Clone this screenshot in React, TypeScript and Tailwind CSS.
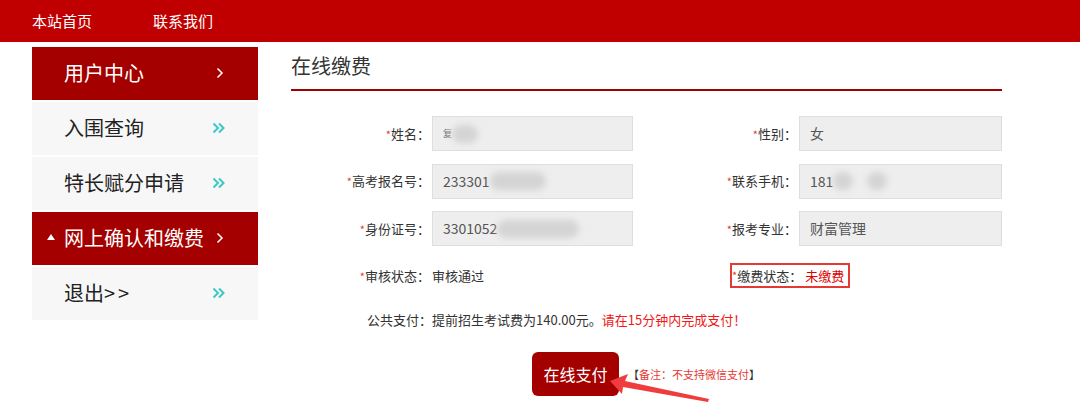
import React from "react";

const font = { fontFamily: '"Noto Sans CJK SC", "Noto Sans", sans-serif' };

const Chevron = () => (
  <svg width="8" height="12" viewBox="0 0 8 12" fill="none">
    <path d="M1.5 1.5 L6 6 L1.5 10.5" stroke="#fff" strokeWidth="1.5" />
  </svg>
);

const DoubleChevron = () => (
  <svg width="14" height="12" viewBox="0 0 14 12" fill="none">
    <path d="M1.5 1.5 L6 6 L1.5 10.5 M7 1.5 L11.5 6 L7 10.5" stroke="#3cc9c5" strokeWidth="2" />
  </svg>
);

const menu = [
  { text: "用户中心", active: true },
  { text: "入围查询" },
  { text: "特长赋分申请" },
  { text: "网上确认和缴费", active: true, caret: true },
  { text: "退出", tail: true },
];

const Blur = ({ w }: { w: number }) => (
  <span
    className="inline-block h-[18px] rounded-full bg-[#d4d4d4] blur-[3px]"
    style={{ width: w }}
  />
);

const Label = ({ text, w }: { text: string; w: string }) => (
  <div className={`${w} shrink-0 text-right text-[13px] text-[#333] pr-[2px]`}>
    <span className="text-[#e53935] text-[11px]">*</span>
    {text}：
  </div>
);

const Field = ({ children, w }: { children: React.ReactNode; w: string }) => (
  <div
    className={`${w} h-[35px] shrink-0 flex items-center bg-[#eeeeee] border border-[#dedede] pl-[10px] text-[14px] text-[#555]`}
  >
    {children}
  </div>
);

export default function App() {
  return (
    <div className="relative w-[1080px] h-[418px] overflow-hidden bg-white" style={font}>
      <div className="h-[42px] bg-[#c00000] flex items-center pl-[32px] gap-[61px] text-white text-[15px]">
        <span>本站首页</span>
        <span>联系我们</span>
      </div>

      <div className="flex pt-[5px]">
        <ul className="ml-[32px] w-[226px] flex flex-col gap-[2.5px]">
          {menu.map((item, i) => (
            <li
              key={i}
              className={`h-[52.5px] flex items-center relative text-[20px] ${
                item.active ? "bg-[#a50000] text-white" : "bg-[#f7f7f7] text-[#222]"
              }`}
            >
              {item.caret && (
                <span className="absolute left-[15px] top-[22px] w-0 h-0 border-l-[4px] border-r-[4px] border-b-[6px] border-l-transparent border-r-transparent border-b-white" />
              )}
              <span className="pl-[32px] flex-1">
                {item.text}
                {item.tail && <span className="tracking-[3px]">&gt;&gt;</span>}
              </span>
              <span className="w-[46px] flex">
                {item.active ? <span className="pl-[4px]"><Chevron /></span> : <DoubleChevron />}
              </span>
            </li>
          ))}
        </ul>

        <div className="ml-[33px] w-[711px]">
          <div className="h-[44px] border-b-2 border-[#a00000] text-[20px] text-[#333] leading-[38px]">
            在线缴费
          </div>

          <div className="mt-[25px] flex flex-col gap-[12.5px]">
            <div className="flex items-center">
              <Label text="姓名" w="w-[141px]" />
              <Field w="w-[201px]">
                <span className="text-[9px] text-[#777]">复</span>
                <Blur w={26} />
              </Field>
              <Label text="性别" w="w-[166px]" />
              <Field w="w-[203px]">女</Field>
            </div>
            <div className="flex items-center">
              <Label text="高考报名号" w="w-[141px]" />
              <Field w="w-[201px]">
                <span>233301</span>
                <Blur w={56} />
              </Field>
              <Label text="联系手机" w="w-[166px]" />
              <Field w="w-[203px]">
                <span>181</span>
                <Blur w={20} />
                <span className="w-[14px]" />
                <Blur w={20} />
              </Field>
            </div>
            <div className="flex items-center">
              <Label text="身份证号" w="w-[141px]" />
              <Field w="w-[201px]">
                <span>3301052</span>
                <Blur w={82} />
              </Field>
              <Label text="报考专业" w="w-[166px]" />
              <Field w="w-[203px]">财富管理</Field>
            </div>
          </div>

          <div className="mt-[17px] flex items-center h-[25px] text-[13px] text-[#333]">
            <Label text="审核状态" w="w-[141px]" />
            <span>审核通过</span>
            <div className="ml-[246px] h-[25px] w-[120px] border-2 border-[#e53935] flex items-center">
              <span className="text-[#e53935] text-[11px]">*</span>
              <span>缴费状态：</span>
              <span className="ml-[3px] text-[#e00000]">未缴费</span>
            </div>
          </div>

          <div className="mt-[22px] flex items-center h-[20px] text-[13px] text-[#333]">
            <div className="w-[141px] text-right">公共支付：</div>
            <span>提前招生考试费为140.00元。</span>
            <span className="text-[#f01818]">请在15分钟内完成支付！</span>
          </div>

          <div className="mt-[22px] flex items-center">
            <button className="ml-[241px] w-[87px] h-[44px] rounded-[6px] bg-[#a50000] text-white text-[16px]">
              在线支付
            </button>
            <span className="ml-[9px] text-[11px] text-[#333]">
              【<span className="text-[#e53935]">备注：不支持微信支付</span>】
            </span>
          </div>
        </div>
      </div>

      <svg className="absolute left-0 top-0 pointer-events-none" width="1080" height="418">
        <polygon
          points="610,381 628,374 625,381 709,399 708,402 623,387 622,394"
          fill="#f03c3c"
        />
      </svg>
    </div>
  );
}
